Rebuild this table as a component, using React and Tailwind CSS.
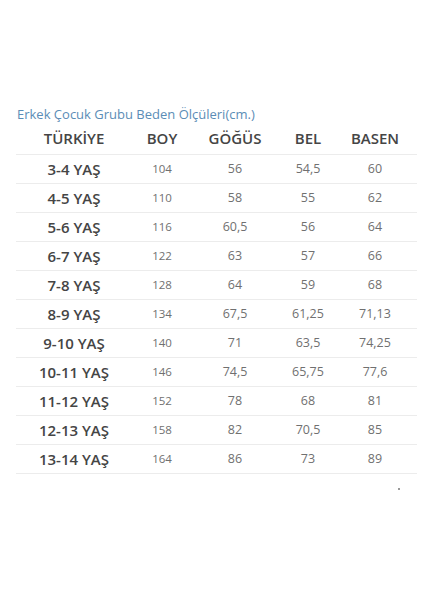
import React from 'react';

const rows = [
  ['3-4 YAŞ', '104', '56', '54,5', '60'],
  ['4-5 YAŞ', '110', '58', '55', '62'],
  ['5-6 YAŞ', '116', '60,5', '56', '64'],
  ['6-7 YAŞ', '122', '63', '57', '66'],
  ['7-8 YAŞ', '128', '64', '59', '68'],
  ['8-9 YAŞ', '134', '67,5', '61,25', '71,13'],
  ['9-10 YAŞ', '140', '71', '63,5', '74,25'],
  ['10-11 YAŞ', '146', '74,5', '65,75', '77,6'],
  ['11-12 YAŞ', '152', '78', '68', '81'],
  ['12-13 YAŞ', '158', '82', '70,5', '85'],
  ['13-14 YAŞ', '164', '86', '73', '89'],
];

const cols = 'grid grid-cols-[116px_60px_86px_60px_74px]';

export default function App() {
  return (
    <div className="w-[424px] h-[600px] bg-white font-['Open_Sans',sans-serif] relative">
      <div className="pt-[104px] pl-4 pr-[7px]">
        <p className="pl-px text-[13px] leading-[20px] text-[#5b8db6]">
          Erkek Çocuk Grubu Beden Ölçüleri(cm.)
        </p>
        <div className={`${cols} h-[31px] pb-[2px] items-center border-b border-[#ececec] text-[15px] font-semibold text-[#454545] text-center`}>
          <span>TÜRKİYE</span>
          <span>BOY</span>
          <span>GÖĞÜS</span>
          <span>BEL</span>
          <span>BASEN</span>
        </div>
        {rows.map((r) => (
          <div
            key={r[0]}
            className={`${cols} h-[29px] items-center border-b border-[#ececec] text-center`}
          >
            <span className="text-[15px] font-semibold text-[#454545]">{r[0]}</span>
            <span className="text-[11.5px] text-[#707070]">{r[1]}</span>
            <span className="text-[12.5px] text-[#707070]">{r[2]}</span>
            <span className="text-[12.5px] text-[#707070]">{r[3]}</span>
            <span className="text-[12.5px] text-[#707070]">{r[4]}</span>
          </div>
        ))}
      </div>
      <span className="absolute left-[398px] top-[488px] w-[2px] h-[2px] bg-[#999]" />
    </div>
  );
}
